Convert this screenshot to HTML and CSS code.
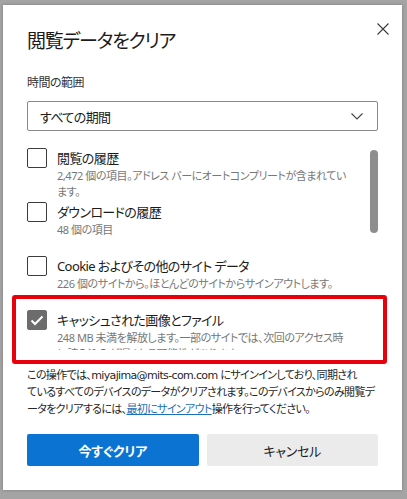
FILE: index.html
```html
<!DOCTYPE html>
<html lang="ja">

<head>
    <meta charset="UTF-8">
    <meta name="viewport" content="width=device-width, initial-scale=1.0">
    <title>閲覧データをクリア</title>
    <link rel="stylesheet" href="styles.css">
</head>

<body>
    <div class="dialog">
        <button class="close" aria-label="閉じる">
            <svg width="12" height="12" viewBox="0 0 12 12">
                <path d="M0.5 0.5 L11.5 11.5 M11.5 0.5 L0.5 11.5" stroke="#3b3b3b" stroke-width="1.1" fill="none" />
            </svg>
        </button>
        <h1 class="title">閲覧データをクリア</h1>

        <label class="range-label" for="range">時間の範囲</label>
        <div class="select" id="range">
            <span>すべての期間</span>
            <svg width="12" height="7" viewBox="0 0 12 7">
                <path d="M0.5 0.5 L6 6 L11.5 0.5" stroke="#444" stroke-width="1.1" fill="none" />
            </svg>
        </div>

        <div class="list-wrap">
            <ul class="list">
                <li class="item">
                    <span class="box"></span>
                    <div>
                        <p class="name">閲覧の履歴</p>
                        <p class="desc">2,472 個の項目。アドレス バーにオートコンプリートが含まれています。</p>
                    </div>
                </li>
                <li class="item">
                    <span class="box"></span>
                    <div>
                        <p class="name">ダウンロードの履歴</p>
                        <p class="desc">48 個の項目</p>
                    </div>
                </li>
                <li class="item">
                    <span class="box"></span>
                    <div>
                        <p class="name">Cookie およびその他のサイト データ</p>
                        <p class="desc">226 個のサイトから。ほとんどのサイトからサインアウトします。</p>
                    </div>
                </li>
                <li class="item">
                    <span class="box checked">
                        <svg width="14" height="11" viewBox="0 0 14 11">
                            <path d="M1.5 5.5 L5 9 L12.5 1.5" stroke="#fff" stroke-width="2" fill="none" />
                        </svg>
                    </span>
                    <div>
                        <p class="name">キャッシュされた画像とファイル</p>
                        <p class="desc">248 MB 未満を解放します。一部のサイトでは、次回のアクセス時に読み込みが遅くなる可能性があります。</p>
                    </div>
                </li>
            </ul>
            <div class="scrollbar"></div>
        </div>

        <p class="note">この操作では、miyajima@mits-com.com にサインインしており、同期され<br>ているすべてのデバイスのデータがクリアされます。このデバイスからのみ閲覧デ<br>ータをクリアするには、<a href="#">最初にサインアウト</a>操作を行ってください。</p>

        <div class="actions">
            <button class="btn primary">今すぐクリア</button>
            <button class="btn">キャンセル</button>
        </div>

        <div class="highlight"></div>
    </div>
</body>

</html>
```

FILE: styles.css
```css
* {
    box-sizing: border-box;
}

body {
    margin: 0;
    height: 499px;
    background: #a4a4a4;
    font-family: "Noto Sans", "Noto Sans CJK JP", sans-serif;
    font-feature-settings: "palt";
    color: #1b1b1b;
    overflow: hidden;
}

.dialog {
    position: relative;
    margin: 5px 0 0 3px;
    width: 399px;
    height: 485px;
    background: #fff;
    padding: 22px 24px 24px 24px;
    box-shadow: 0 0 3px rgba(0, 0, 0, 0.25);
}

.close {
    position: absolute;
    top: 13px;
    right: 8px;
    width: 22px;
    height: 22px;
    border: none;
    background: none;
    padding: 5px;
    display: flex;
}

.title {
    margin: 0;
    font-size: 19px;
    letter-spacing: -1.2px;
    line-height: 28px;
    font-weight: 400;
}

.range-label {
    display: block;
    margin-top: 19px;
    font-size: 12px;
    letter-spacing: -0.5px;
    line-height: 18px;
    color: #333;
}

.select {
    margin-top: 9px;
    height: 30px;
    border: 1px solid #8a8a8a;
    border-radius: 2px;
    display: flex;
    align-items: center;
    justify-content: space-between;
    padding: 0 14px 0 12px;
    font-size: 13px;
    letter-spacing: -0.6px;
}

.list-wrap {
    position: relative;
    margin-top: 17px;
    height: 202px;
    overflow: hidden;
}

.list {
    list-style: none;
    margin: 0;
    padding: 0 29px 0 0;
}

.item {
    display: flex;
    gap: 10px;
    min-height: 54px;
}

.box {
    flex: none;
    width: 20px;
    height: 20px;
    border: 1px solid #3c3c3c;
    border-radius: 2px;
    display: flex;
    align-items: center;
    justify-content: center;
}

.box.checked {
    background: #6c6c6c;
    border-color: #6c6c6c;
}

.name {
    margin: 0;
    font-size: 13px;
    letter-spacing: -0.6px;
    line-height: 20px;
}

.desc {
    margin: 0;
    font-size: 11px;
    letter-spacing: -0.45px;
    line-height: 16px;
    color: #777;
}

.scrollbar {
    position: absolute;
    top: 2px;
    right: 0;
    width: 8px;
    height: 83px;
    border-radius: 4px;
    background: #8e8e8e;
}

.note {
    margin: 17px 0 0 0;
    font-family: "DejaVu Sans", "Noto Sans CJK JP", sans-serif;
    font-size: 11px;
    letter-spacing: -0.65px;
    line-height: 17px;
    color: #262626;
    white-space: nowrap;
}

.note a {
    color: #1c6fb6;
    text-decoration: underline;
}

.actions {
    display: grid;
    grid-template-columns: 1fr 1fr;
    gap: 8px;
    margin-top: 16px;
}

.btn {
    height: 32px;
    border: none;
    border-radius: 2px;
    background: #ebebeb;
    font-family: inherit;
    font-feature-settings: "palt";
    font-size: 13px;
    letter-spacing: -0.3px;
    color: #1b1b1b;
}

.btn.primary {
    background: #0b74d2;
    color: #fff;
    font-weight: 700;
}

.highlight {
    position: absolute;
    left: 9px;
    top: 290px;
    width: 375px;
    height: 69px;
    border: 4px solid #e8000b;
    border-radius: 3px;
}
```
